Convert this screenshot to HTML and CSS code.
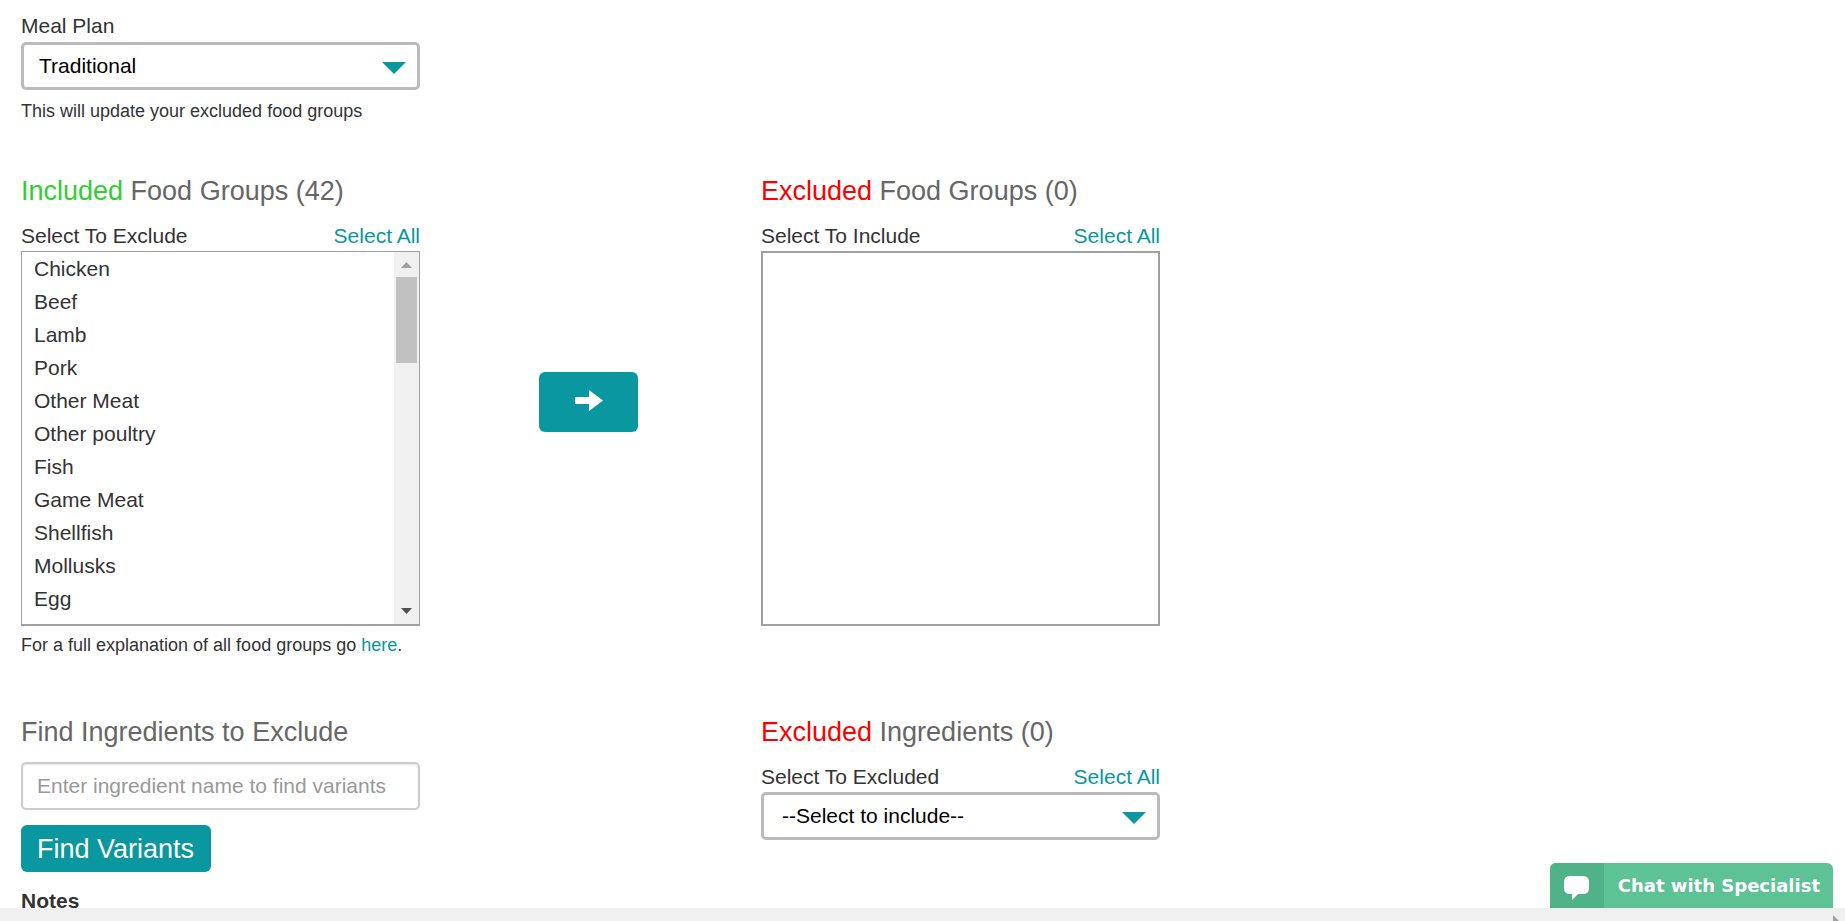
FILE: index.html
```html
<!DOCTYPE html>
<html lang="en">
<head>
<meta charset="utf-8">
<title>Food Groups</title>
<link rel="stylesheet" href="styles.css">
</head>
<body>
<main class="page">
  <form class="preferences">
    <section class="row">
      <div class="field">
        <label class="label" for="meal-plan">Meal Plan</label>
        <div class="dropdown dropdown-spaced">
          <select class="dropdown-select" id="meal-plan"><option>Traditional</option></select>
          <svg class="caret" viewBox="0 0 24 12" aria-hidden="true"><path d="M0 0H24L12 12Z"/></svg>
        </div>
        <p class="note">This will update your excluded food groups</p>
      </div>
    </section>

    <section class="row row-groups">
      <div class="field">
        <h2 class="heading"><span class="included">Included</span> Food Groups (42)</h2>
        <div class="list-head">
          <label class="label" for="included-groups">Select To Exclude</label>
          <a class="link" href="#">Select All</a>
        </div>
        <div class="list-frame">
          <select class="listbox listbox-filled" id="included-groups" multiple>
            <option>Chicken</option><option>Beef</option><option>Lamb</option><option>Pork</option>
            <option>Other Meat</option><option>Other poultry</option><option>Fish</option><option>Game Meat</option>
            <option>Shellfish</option><option>Mollusks</option><option>Egg</option>
          </select>
          <div class="scrollbar" aria-hidden="true">
            <svg class="scroll-end scroll-up" viewBox="0 0 11 6"><path d="M0 6L5.5 0L11 6Z"/></svg>
            <div class="scroll-track"><div class="scroll-thumb"></div></div>
            <svg class="scroll-end scroll-down" viewBox="0 0 11 6"><path d="M0 0H11L5.5 6Z"/></svg>
          </div>
        </div>
        <p class="note note-list">For a full explanation of all food groups go <a class="link" href="#">here</a>.</p>
      </div>
      <div class="transfer">
        <button class="button button-move" type="button" aria-label="Exclude selected groups">
          <svg class="arrow" viewBox="0 0 28 21" aria-hidden="true"><path d="M0 7H14V0L28 10.5L14 21V14H0Z"/></svg>
        </button>
      </div>
      <div class="field">
        <h2 class="heading"><span class="excluded">Excluded</span> Food Groups (0)</h2>
        <div class="list-head">
          <label class="label" for="excluded-groups">Select To Include</label>
          <a class="link" href="#">Select All</a>
        </div>
        <select class="listbox" id="excluded-groups" multiple></select>
      </div>
    </section>

    <section class="row row-ingredients">
      <div class="field">
        <h2 class="heading"><label for="ingredient">Find Ingredients to Exclude</label></h2>
        <input class="textbox" id="ingredient" type="text" placeholder="Enter ingredient name to find variants">
        <button class="button button-find" type="button">Find Variants</button>
        <h3 class="subheading">Notes</h3>
      </div>
      <div class="field field-right">
        <h2 class="heading"><span class="excluded">Excluded</span> Ingredients (0)</h2>
        <div class="list-head">
          <label class="label" for="excluded-ingredients">Select To Excluded</label>
          <a class="link" href="#">Select All</a>
        </div>
        <div class="dropdown">
          <select class="dropdown-select dropdown-indent" id="excluded-ingredients"><option>--Select to include--</option></select>
          <svg class="caret" viewBox="0 0 24 12" aria-hidden="true"><path d="M0 0H24L12 12Z"/></svg>
        </div>
      </div>
    </section>
  </form>
  <button class="chat" type="button">
    <span class="chat-icon">
      <svg class="bubble" viewBox="0 0 25 24" aria-hidden="true"><path d="M6 0H19Q25 0 25 6V12Q25 18 19 18H14L8 24V18H6Q0 18 0 12V6Q0 0 6 0Z"/></svg>
    </span>
    <span class="chat-text">Chat with Specialist</span>
  </button>
</main>
<div class="scroll-strip">
  <svg class="scroll-arrow" viewBox="0 0 6 6" aria-hidden="true"><path d="M0 0L6 6H0Z"/></svg>
</div>
</body>
</html>
```
FILE: styles.css
```css
* {
  box-sizing: border-box;
}

body {
  display: flex;
  flex-direction: column;
  height: 100vh;
  margin: 0;
  overflow: hidden;
  background: #fff;
  color: #333;
  font-family: "Liberation Sans", Arial, sans-serif;
  font-size: 21px;
}

.page {
  position: relative;
  flex: 1;
  min-height: 0;
  overflow: hidden;
}

.preferences {
  padding: 11px 21px 0;
}

.row {
  display: grid;
  grid-template-columns: 399fr 341fr 399fr 664fr;
}

.row-groups {
  margin-top: 47px;
}

.row-ingredients {
  margin-top: 54px;
}

.field-right {
  grid-column: 3;
}

.label {
  display: block;
  line-height: 30px;
}

.heading {
  margin: 0 0 10px;
  color: #666;
  font-size: 27px;
  font-weight: 400;
  line-height: 40px;
}

.included {
  color: #32cd32;
}

.excluded {
  color: #f00;
}

.list-head {
  display: flex;
  justify-content: space-between;
  line-height: 30px;
}

.link {
  color: #0a979f;
  text-decoration: none;
}

.note {
  margin: 8px 0 0;
  font-size: 18px;
  line-height: 26px;
}

.note-list {
  margin-top: 6px;
}

.dropdown {
  position: relative;
}

.dropdown-spaced {
  margin-top: 1px;
}

.dropdown-select {
  display: block;
  width: 100%;
  height: 48px;
  padding: 0 48px 2px 15px;
  border: 3px solid #bbb;
  border-radius: 5px;
  appearance: none;
  background: #fff;
  color: #000;
  font: inherit;
}

.dropdown-indent {
  padding-left: 18px;
}

.caret {
  position: absolute;
  top: 20px;
  right: 14px;
  width: 24px;
  height: 12px;
  fill: #0a979f;
  pointer-events: none;
}

.listbox {
  display: block;
  width: 100%;
  height: 375px;
  padding: 0;
  border: 2px solid #a0a0a0;
  border-radius: 0;
  outline: 0;
  background: #fff;
  color: #333;
  font: inherit;
}

.list-frame {
  display: flex;
  height: 375px;
  border: solid #a0a0a0;
  border-width: 1px 1px 2px;
}

.listbox-filled {
  flex: 1;
  min-width: 0;
  height: auto;
  border: 0;
}

.listbox option {
  padding: 5px 12px 4px;
}

.scrollbar {
  display: flex;
  flex-direction: column;
  align-items: center;
  width: 25px;
  background: #f0f0f0;
}

.scroll-end {
  width: 11px;
  height: 6px;
  margin: 10px 0 9px;
}

.scroll-up {
  fill: #a0a0a0;
}

.scroll-down {
  margin: 9px 0 10px;
  fill: #505050;
}

.scroll-track {
  flex: 1;
  width: 21px;
}

.scroll-thumb {
  height: 86px;
  background: #c1c1c1;
}

.transfer {
  display: flex;
  align-items: flex-start;
  justify-content: center;
  padding: 201px 4px 0 0;
}

.button {
  display: block;
  border: 0;
  border-radius: 6px;
  background: #0a979f;
  color: #fff;
  font-family: inherit;
}

.button-move {
  padding: 18px 35px 21px 36px;
}

.arrow {
  display: block;
  width: 28px;
  height: 21px;
  fill: #fff;
}

.textbox {
  display: block;
  width: 100%;
  height: 48px;
  padding: 0 14px;
  border: 2px solid #ccc;
  border-radius: 5px;
  box-shadow: inset 0 1px 2px rgba(0, 0, 0, 0.1);
  color: #333;
  font: inherit;
}

.textbox::placeholder {
  color: #999;
}

.button-find {
  margin-top: 15px;
  padding: 1px 17px 0 16px;
  font-size: 27px;
  line-height: 46px;
}

.subheading {
  margin: 14px 0 0;
  font-size: 21px;
  line-height: 30px;
}

.chat {
  position: absolute;
  right: 12px;
  bottom: 0;
  display: flex;
  height: 45px;
  padding: 0;
  border: 0;
  border-radius: 6px 6px 0 0;
  overflow: hidden;
  background: #5ec297;
  color: #fff;
  font-family: "DejaVu Sans", Verdana, sans-serif;
  font-size: 18px;
  font-weight: 700;
  line-height: 45px;
}

.chat-icon {
  padding: 13px 15px 8px 14px;
  background: #50b289;
}

.bubble {
  display: block;
  width: 25px;
  height: 24px;
  fill: #fff;
}

.chat-text {
  padding: 0 13px 0 14px;
}

.scroll-strip {
  display: flex;
  align-items: flex-end;
  justify-content: flex-end;
  height: 13px;
  padding-right: 6px;
  background: #f0f0f0;
}

.scroll-arrow {
  width: 6px;
  height: 6px;
  fill: #a0a0a0;
}
```
